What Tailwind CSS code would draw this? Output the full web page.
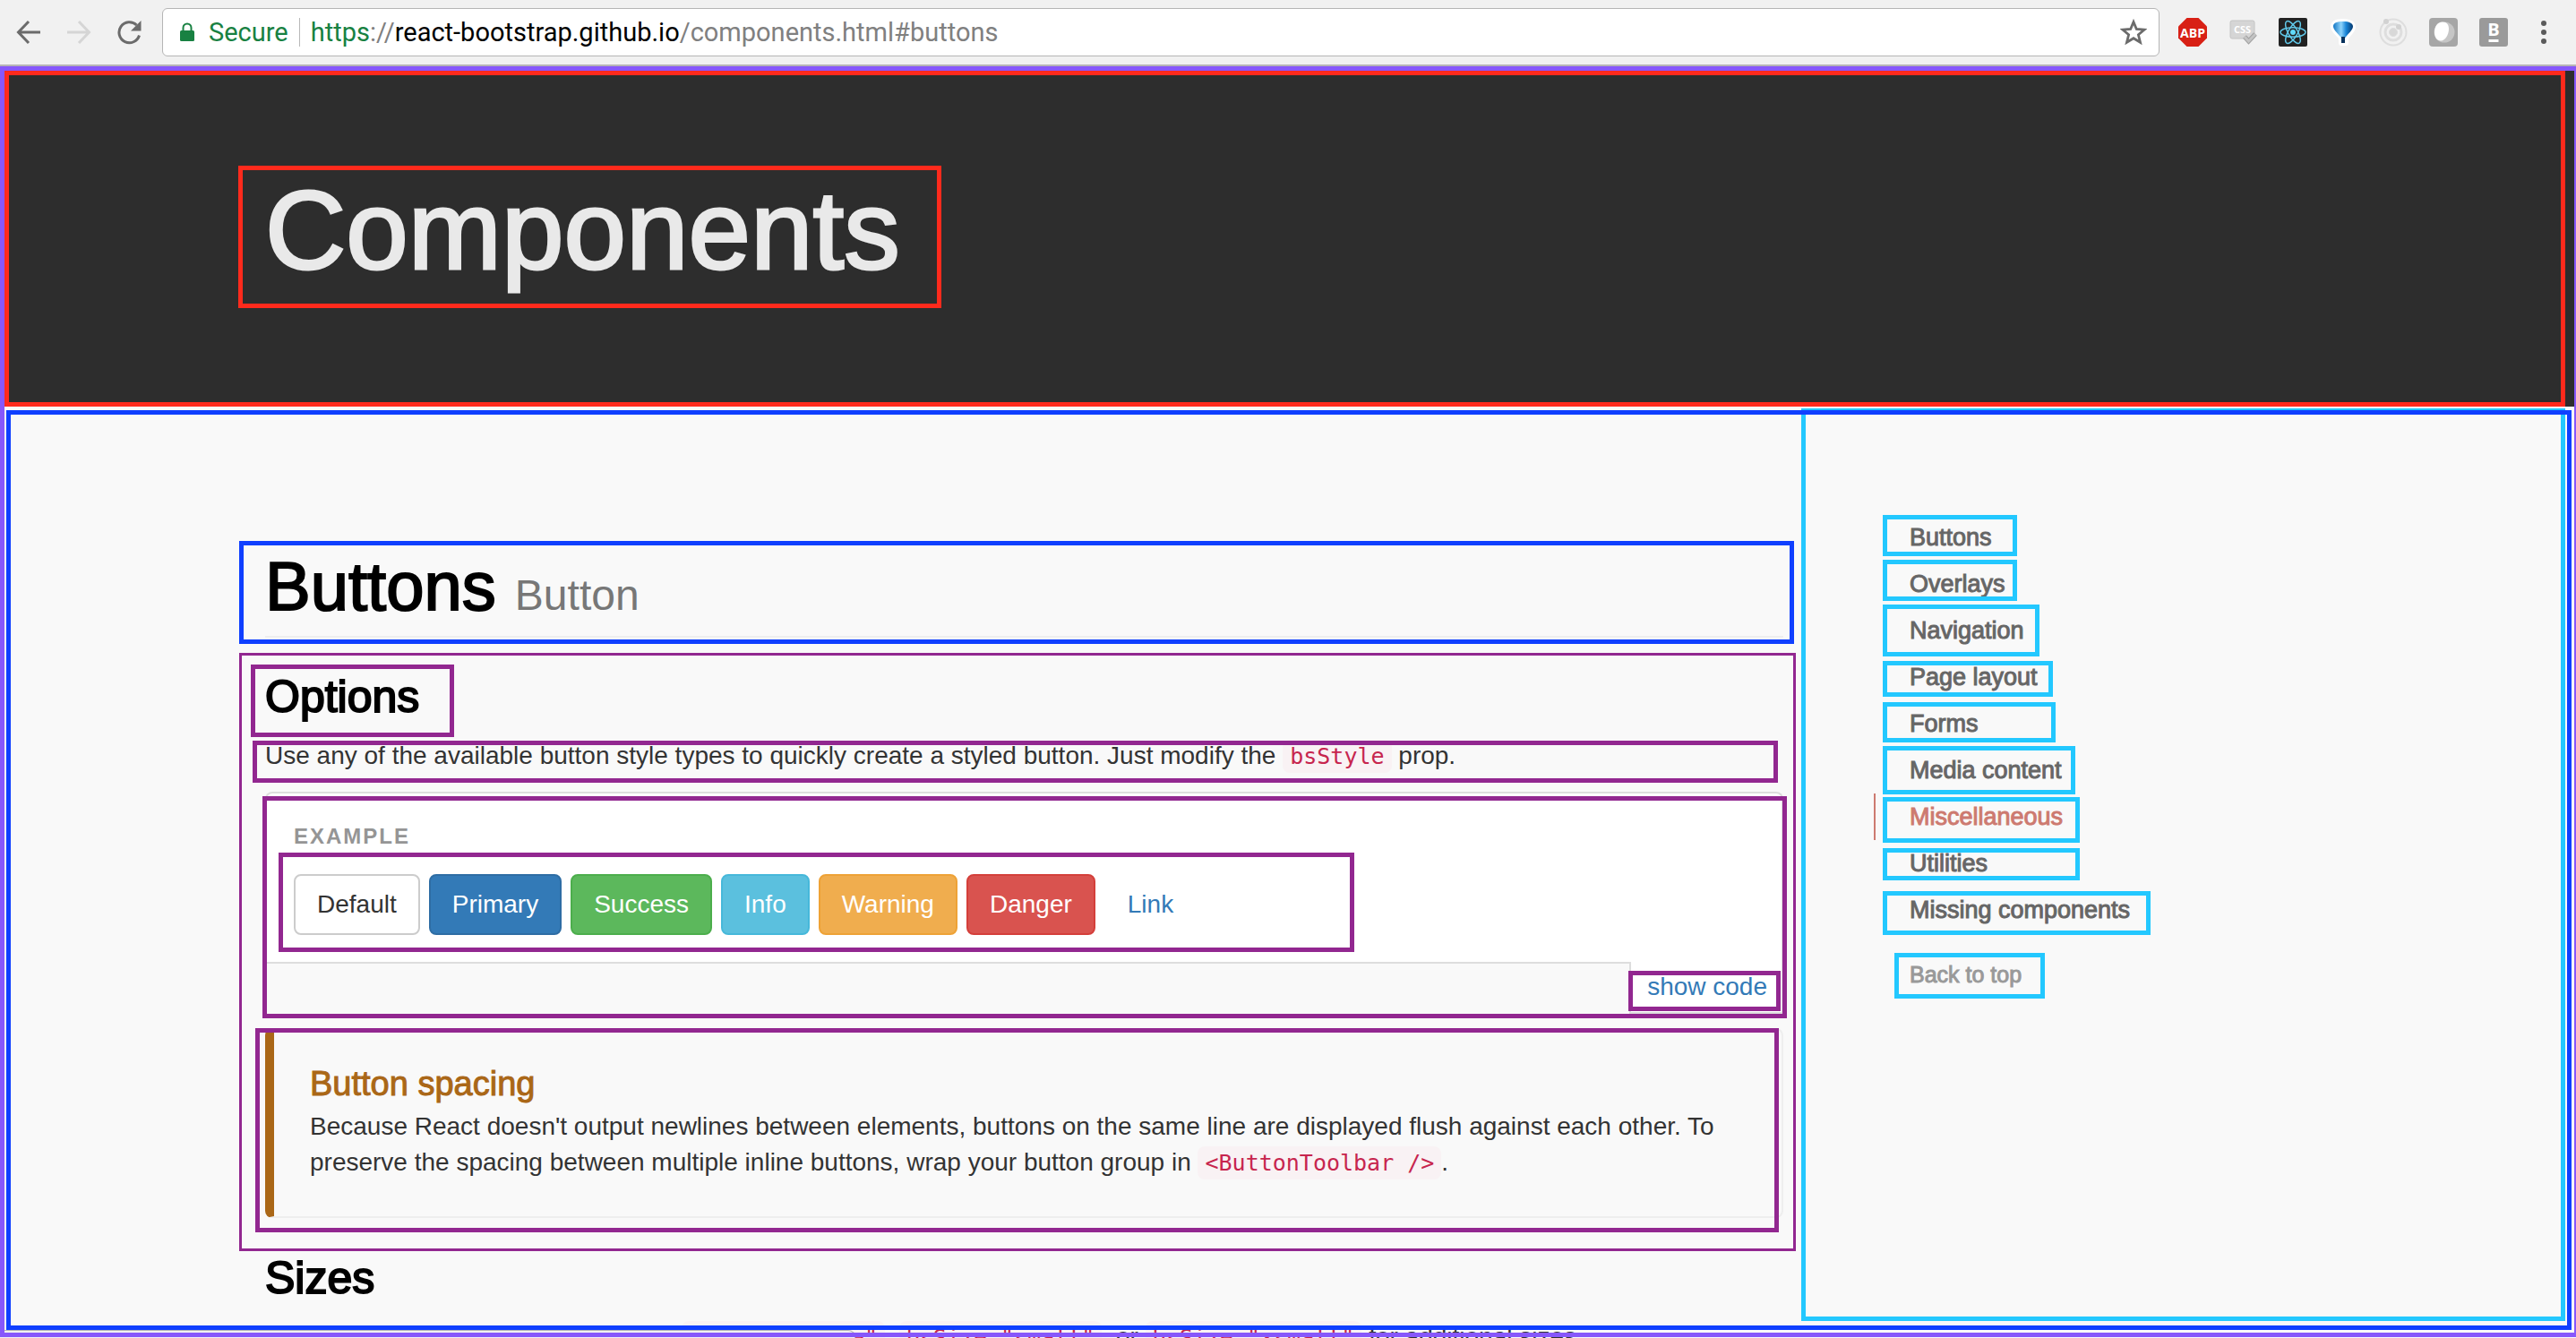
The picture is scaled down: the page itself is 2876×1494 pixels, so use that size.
<!DOCTYPE html>
<html lang="en">
<head>
<meta charset="utf-8">
<title>Components</title>
<script src="https://cdn.jsdelivr.net/npm/@tailwindcss/browser@4"></script>
</head>
<body class="relative flex h-screen flex-col overflow-hidden bg-[#f9f9f9] font-['Liberation_Sans',sans-serif] text-[28px] leading-[40px] text-[#333]">

<!-- Browser toolbar -->
<div class="flex h-[74px] shrink-0 items-center border-b-2 border-[#b6b4b6] bg-[#f1f1f1] pr-5 pl-[18px] font-[Roboto,sans-serif]">
  <button aria-label="Back" class="mr-7"><svg width="28" height="28" viewBox="0 0 28 28" fill="none" stroke="#6b6b6b" stroke-width="3"><path d="M27 14H3M14 2 2.500 14 14 26"/></svg></button>
  <button aria-label="Forward" class="mr-7"><svg width="28" height="28" viewBox="0 0 28 28" fill="none" stroke="#d5d5d5" stroke-width="3"><path d="M1 14h24M14 2l11.500 12L14 26"/></svg></button>
  <button aria-label="Reload" class="mr-[23px]"><svg width="28" height="28" viewBox="0 0 28 28"><path d="M25.500 17.500A11.500 11.500 0 1 1 22.500 6" fill="none" stroke="#6b6b6b" stroke-width="3"/><path d="M27.500 1v11.500H16z" fill="#6b6b6b"/></svg></button>
  <div class="flex h-[54px] flex-1 items-center rounded-[6px] border border-[#b5b5b5] bg-white pr-[13px] pl-[18px] text-[29px] whitespace-nowrap">
    <svg width="18" height="22" viewBox="0 0 18 22" class="mr-[15px]"><rect x="1" y="9" width="16" height="12" rx="1.500" fill="#188142"/><path d="M4.500 10V6a4.500 4.500 0 0 1 9 0v4" fill="none" stroke="#188142" stroke-width="2"/></svg>
    <span class="text-[#188142]">Secure</span>
    <span class="mr-3 ml-3 h-8 w-px bg-[#b8b8b8]"></span>
    <a href="#buttons" class="flex-1 text-[#808080]"><span class="text-[#188142]">https</span>://<span class="text-black">react-bootstrap.github.io</span>/components.html#buttons</a>
    <button aria-label="Bookmark this page"><svg width="30" height="30" viewBox="0 0 30 30"><path d="M15 3.500l3.300 8 8.700.700-6.600 5.600 2.100 8.400L15 21.700l-7.500 4.500 2.100-8.400L3 12.200l8.700-.700z" fill="none" stroke="#6b6b6b" stroke-width="2.800"/></svg></button>
  </div>
  <div class="ml-[21px] flex items-center gap-6">
    <svg width="32" height="32" viewBox="0 0 32 32"><path d="M9.500 0h13L32 9.500v13L22.500 32h-13L0 22.500v-13z" fill="#d82015"/><text x="16" y="21.500" text-anchor="middle" font-family="Open Sans" font-weight="700" font-size="14" fill="#fff">ABP</text></svg>
    <svg width="32" height="32" viewBox="0 0 32 32"><rect x="2" y="3" width="27" height="20" rx="2" fill="#d5d5d5" stroke="#c4c4c4"/><text x="15.500" y="17" text-anchor="middle" font-family="Open Sans" font-weight="700" font-size="11" fill="#fff">CSS</text><path d="M18 21l4.500 5L30 18" fill="none" stroke="#a0a0a0" stroke-width="5"/><path d="M18 21l4.500 5L30 18" fill="none" stroke="#c4c4c4" stroke-width="3"/></svg>
    <svg width="32" height="32" viewBox="0 0 32 32"><rect width="32" height="32" rx="2" fill="#222"/><circle cx="16" cy="16" r="3" fill="#61dafb"/><g fill="none" stroke="#61c9ea" stroke-width="1.500"><ellipse cx="16" cy="16" rx="14" ry="5.200"/><ellipse cx="16" cy="16" rx="14" ry="5.200" transform="rotate(60 16 16)"/><ellipse cx="16" cy="16" rx="14" ry="5.200" transform="rotate(120 16 16)"/></g></svg>
    <svg width="32" height="32" viewBox="0 0 32 32"><defs><linearGradient id="balloon" x1="0" x2="1" y1="0" y2="0"><stop offset="0" stop-color="#1477c4"/><stop offset=".4" stop-color="#8fd4fb"/><stop offset=".65" stop-color="#1a86d8"/><stop offset="1" stop-color="#063a70"/></linearGradient></defs><path d="M16 4c7 0 11 2.500 11 6 0 4-5 8-8 12v6h-5v-6C11 18 5 14 5 10s4-6 11-6z" fill="#fff" stroke="#fff" stroke-width="6" stroke-linejoin="round"/><path d="M16 4c7 0 11 2 11 5.500 0 4-5.500 8-9 13V28h-4v-5.500C11 18 5 13.500 5 9.500S9 4 16 4z" fill="url(#balloon)"/><path d="M14 21h4v7h-4z" fill="#08325c"/></svg>
    <svg width="32" height="32" viewBox="0 0 32 32" fill="none" stroke="#dedede"><circle cx="16" cy="16" r="14.500" stroke-width="2"/><circle cx="16" cy="16" r="9" stroke-width="3"/><circle cx="16" cy="16" r="4.500" fill="#d8d8d8"/><circle cx="8" cy="4" r="3" fill="#d2d2d2" stroke="none"/><circle cx="22" cy="10" r="3" fill="#d2d2d2" stroke="none"/></svg>
    <svg width="32" height="32" viewBox="0 0 32 32"><rect width="32" height="32" rx="4" fill="#a6a6a6"/><circle cx="17" cy="16" r="11.500" fill="#c6c6c6"/><path d="M15 4.500c5 0 7 3 7 8 0 6-4 13-9 13-4 0-7-4-7-9 0-7 3-12 9-12z" fill="#fff"/></svg>
    <svg width="32" height="32" viewBox="0 0 32 32"><rect width="32" height="32" rx="3" fill="#9a9a9a"/><text x="16" y="20" text-anchor="middle" font-family="Open Sans" font-weight="700" font-size="20" fill="#fff">B</text><path d="M10.500 25.500h11" stroke="#fff" stroke-width="3"/></svg>
    <button aria-label="Menu"><svg width="32" height="32" viewBox="0 0 32 32" fill="#5a5a5a"><circle cx="16" cy="6" r="3"/><circle cx="16" cy="16" r="3"/><circle cx="16" cy="26" r="3"/></svg></button>
  </div>
</div>

<!-- Page header -->
<header class="relative shrink-0 bg-[#2d2d2d] pr-1">
  <span class="pointer-events-none absolute top-[5px] right-3 bottom-0 left-[5px] border-5 border-[#ff2a1c]"></span>
  <div class="mx-auto max-w-[2340px] px-[30px] pt-[117px] pb-[131px]">
    <h1 class="relative w-fit text-[125px] leading-[132px] text-[#e9e9e9] [-webkit-text-stroke:3px_#e9e9e9]">Components
      <span class="pointer-events-none absolute -top-[6px] -left-[30px] h-[159px] w-[785px] border-5 border-[#ff2a1c]"></span>
    </h1>
  </div>
</header>

<main class="relative min-h-0 flex-1 pr-1">
  <div class="mx-auto flex max-w-[2340px]">
    <div class="w-3/4 px-[30px] pt-[161px]">
      <div class="relative border-b-2 border-[#eee] pb-[15px]">
        <h1 class="text-[76px] leading-[80px] text-black [-webkit-text-stroke:2px_#000]">Buttons <small class="text-[48px] leading-none text-[#777] [-webkit-text-stroke:0px]">Button</small></h1>
        <span class="pointer-events-none absolute -top-[11px] -right-3 -bottom-[9px] -left-[29px] border-5 border-[#0f3fff]"></span>
      </div>

      <section class="relative mt-10">
        <h3 class="relative w-fit text-[50px] leading-[52px] text-black [-webkit-text-stroke:2px_#000]">Options
          <span class="pointer-events-none absolute -top-[10px] -left-4 h-[81px] w-[227px] border-5 border-[#922790]"></span>
        </h3>
        <p class="relative mt-5">Use any of the available button style types to quickly create a styled button. Just modify the <code class="rounded-lg bg-[#f9f2f4] px-2 py-1 font-['DejaVu_Sans_Mono',monospace] text-[25px] leading-none text-[#c7254e]">bsStyle</code> prop.
          <span class="pointer-events-none absolute top-[3px] right-[6px] -bottom-[10px] -left-[14px] border-5 border-[#922790]"></span>
        </p>

        <!-- Live example -->
        <div class="relative mt-5 rounded-t-lg border-2 border-b-0 border-[#ddd] bg-white">
          <div class="px-[30px] pt-[31px] pb-[30px]">
            <div class="text-[24px] leading-[34px] font-bold tracking-[2px] text-[#959595]">EXAMPLE</div>
            <div class="relative mt-[25px] flex gap-[10px]">
              <button class="rounded-lg border-2 border-[#ccc] bg-white px-6 py-3">Default</button>
              <button class="rounded-lg border-2 border-[#2e6da4] bg-[#337ab7] px-6 py-3 text-white">Primary</button>
              <button class="rounded-lg border-2 border-[#4cae4c] bg-[#5cb85c] px-6 py-3 text-white">Success</button>
              <button class="rounded-lg border-2 border-[#46b8da] bg-[#5bc0de] px-6 py-3 text-white">Info</button>
              <button class="rounded-lg border-2 border-[#eea236] bg-[#f0ad4e] px-6 py-3 text-white">Warning</button>
              <button class="rounded-lg border-2 border-[#d43f3a] bg-[#d9534f] px-6 py-3 text-white">Danger</button>
              <button class="rounded-lg border-2 border-transparent px-6 py-3 text-[#337ab7]">Link</button>
              <span class="pointer-events-none absolute -top-6 -bottom-[19px] -left-[17px] w-[1201px] border-5 border-[#922790]"></span>
            </div>
          </div>
          <div class="flex">
            <div class="flex-1 border-t-2 border-r-2 border-[#ddd] bg-[#f9f9f9]"></div>
            <div class="relative border-b-2 border-[#ddd] py-2 pr-4 pl-[18px]">
              <a href="#code" class="text-[#337ab7]">show code</a>
              <span class="pointer-events-none absolute top-[10px] right-px bottom-px -left-[3px] border-5 border-[#922790]"></span>
            </div>
          </div>
          <span class="pointer-events-none absolute top-[3px] -right-[6px] -bottom-[5px] -left-[5px] border-5 border-[#922790]"></span>
        </div>

        <!-- Callout -->
        <div class="relative mt-4 rounded-lg border-2 border-l-10 border-[#eee] border-l-[#aa6717] p-10">
          <h4 class="text-[38px] leading-[40px] text-[#aa6717] [-webkit-text-stroke:1px_#aa6717]">Button spacing</h4>
          <p class="mt-2">Because React doesn't output newlines between elements, buttons on the same line are displayed flush against each other. To preserve the spacing between multiple inline buttons, wrap your button group in <code class="rounded-lg bg-[#f9f2f4] px-2 py-1 font-['DejaVu_Sans_Mono',monospace] text-[25px] leading-none text-[#c7254e]">&lt;ButtonToolbar /&gt;</code>.</p>
          <span class="pointer-events-none absolute -top-[2px] right-[3px] -bottom-[18px] -left-[21px] border-5 border-[#922790]"></span>
        </div>
        <span class="pointer-events-none absolute -top-[23px] -right-[14px] -bottom-[37px] -left-[29px] border-3 border-[#922790]"></span>
      </section>

      <section class="mt-[41px]">
        <h3 class="text-[50px] leading-[52px] text-black [-webkit-text-stroke:2px_#000]">Sizes</h3>
        <p class="mt-5">Fancy larger or smaller buttons? Add <code class="rounded-lg bg-[#f9f2f4] px-2 py-1 font-['DejaVu_Sans_Mono',monospace] text-[25px] leading-none text-[#c7254e]">bsSize="large"</code>, <code class="rounded-lg bg-[#f9f2f4] px-2 py-1 font-['DejaVu_Sans_Mono',monospace] text-[25px] leading-none text-[#c7254e]">bsSize="small"</code>, or <code class="rounded-lg bg-[#f9f2f4] px-2 py-1 font-['DejaVu_Sans_Mono',monospace] text-[25px] leading-none text-[#c7254e]">bsSize="xsmall"</code> for additional sizes.</p>
      </section>
    </div>

    <!-- Side navigation -->
    <nav class="flex-1 pt-30 pl-[71px] text-[27px] leading-[52px] text-[#666] [-webkit-text-stroke:1px]">
      <ul>
        <li class="relative border-l-2 border-transparent pl-[38px]"><a href="#buttons">Buttons</a><span class="pointer-events-none absolute top-px left-2 h-[46px] w-[150px] border-5 border-[#23c8ff]"></span></li>
        <li class="relative border-l-2 border-transparent pl-[38px]"><a href="#overlays">Overlays</a><span class="pointer-events-none absolute -top-px left-2 h-[46px] w-[150px] border-5 border-[#23c8ff]"></span></li>
        <li class="relative border-l-2 border-transparent pl-[38px]"><a href="#navigation">Navigation</a><span class="pointer-events-none absolute -top-[3px] left-2 h-[58px] w-[175px] border-5 border-[#23c8ff]"></span></li>
        <li class="relative border-l-2 border-transparent pl-[38px]"><a href="#page-layout">Page layout</a><span class="pointer-events-none absolute top-2 left-2 h-[40px] w-[190px] border-5 border-[#23c8ff]"></span></li>
        <li class="relative border-l-2 border-transparent pl-[38px]"><a href="#forms">Forms</a><span class="pointer-events-none absolute top-[2px] left-2 h-[45px] w-[193px] border-5 border-[#23c8ff]"></span></li>
        <li class="relative border-l-2 border-transparent pl-[38px]"><a href="#media-content">Media content</a><span class="pointer-events-none absolute -top-px left-2 h-[54px] w-[215px] border-5 border-[#23c8ff]"></span></li>
        <li class="relative border-l-2 border-[#cd7a70] pl-[38px] text-[#cd7a70]"><a href="#misc">Miscellaneous</a><span class="pointer-events-none absolute top-1 left-2 h-[51px] w-[220px] border-5 border-[#23c8ff]"></span></li>
        <li class="relative border-l-2 border-transparent pl-[38px]"><a href="#utilities">Utilities</a><span class="pointer-events-none absolute top-[9px] left-2 h-[36px] w-[220px] border-5 border-[#23c8ff]"></span></li>
        <li class="relative border-l-2 border-transparent pl-[38px]"><a href="#missing">Missing components</a><span class="pointer-events-none absolute top-[5px] left-2 h-[49px] w-[299px] border-5 border-[#23c8ff]"></span></li>
      </ul>
      <div class="relative mt-[26px] pl-10 text-[25px] leading-[40px] text-[#999]"><a href="#top">Back to top</a><span class="pointer-events-none absolute -top-1 left-[23px] h-[51px] w-[168px] border-5 border-[#23c8ff]"></span></div>
    </nav>
  </div>

  <!-- Link status bubble along the window's lower edge -->
  <div class="absolute bottom-0 left-0 h-[9px] w-[955px] rounded-tr-lg border-t border-r border-[#b5b5b5] bg-[#f1f1f1]"></div>

  <span class="pointer-events-none absolute top-[2px] right-3 bottom-[19px] left-[calc(50%+573px)] border-5 border-[#23c8ff]"></span>
  <span class="pointer-events-none absolute top-1 right-[5px] bottom-[9px] left-[7px] border-5 border-[#0f3fff]"></span>
</main>

<span class="pointer-events-none absolute top-[74px] right-0 bottom-px left-0 border-5 border-r-2 border-[#8757fb]"></span>
</body>
</html>
